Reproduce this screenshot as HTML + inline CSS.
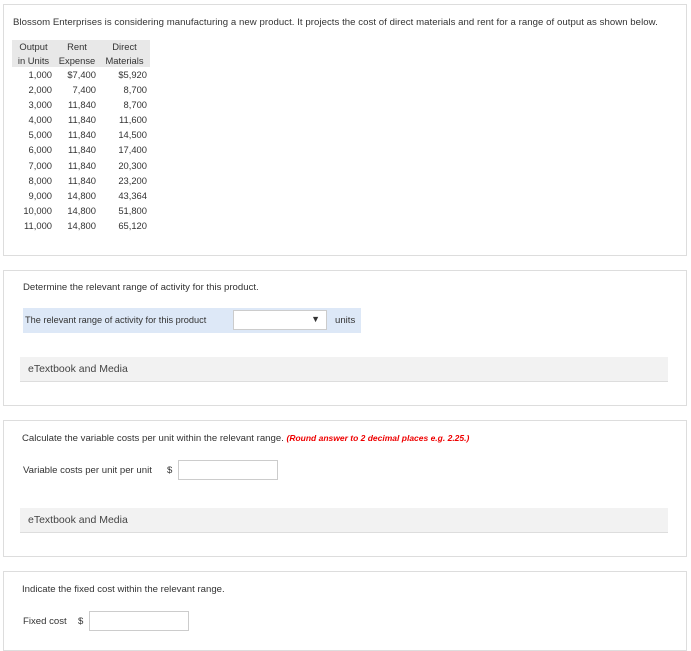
<!DOCTYPE html>
<html><head><style>
body{margin:0;background:#fff;font-family:"Liberation Sans",sans-serif;font-size:9.6px;color:#333;width:691px;height:635px;overflow:hidden;position:relative}
.p{position:absolute;left:3px;width:684px;border:1px solid #ddd;box-sizing:border-box;background:#fff}
.a{position:absolute;white-space:nowrap}
table{border-collapse:collapse;position:absolute;left:8px;top:35px;font-size:9.4px;table-layout:fixed}
td,th{padding:0 3px;text-align:right;height:15.1px;line-height:15.1px}
th{font-weight:normal;text-align:center;background:#e8e8e8;height:13.5px;line-height:13.5px}
.et{position:absolute;left:16px;width:648px;height:25px;background:#f2f2f2;border-bottom:1px solid #ddd;font-size:10.5px;line-height:25px;padding-left:8px;box-sizing:border-box;color:#444}
.inp{position:absolute;border:1px solid #ccc;background:#fff;box-sizing:border-box}
</style></head><body>
<div class="p" style="top:4px;height:252px">
<div class="a" style="left:9px;top:12px;letter-spacing:0.05px">Blossom Enterprises is considering manufacturing a new product. It projects the cost of direct materials and rent for a range of output as shown below.</div>
<table>
<colgroup><col style="width:43px"><col style="width:44px"><col style="width:51px"></colgroup>
<tr><th>Output<br>in Units</th><th>Rent<br>Expense</th><th>Direct<br>Materials</th></tr>
<tr><td>1,000</td><td>$7,400</td><td>$5,920</td></tr>
<tr><td>2,000</td><td>7,400</td><td>8,700</td></tr>
<tr><td>3,000</td><td>11,840</td><td>8,700</td></tr>
<tr><td>4,000</td><td>11,840</td><td>11,600</td></tr>
<tr><td>5,000</td><td>11,840</td><td>14,500</td></tr>
<tr><td>6,000</td><td>11,840</td><td>17,400</td></tr>
<tr><td>7,000</td><td>11,840</td><td>20,300</td></tr>
<tr><td>8,000</td><td>11,840</td><td>23,200</td></tr>
<tr><td>9,000</td><td>14,800</td><td>43,364</td></tr>
<tr><td>10,000</td><td>14,800</td><td>51,800</td></tr>
<tr><td>11,000</td><td>14,800</td><td>65,120</td></tr>
</table>
</div>
<div class="p" style="top:270px;height:136px">
<div class="a" style="left:19px;top:11px">Determine the relevant range of activity for this product.</div>
<div class="a" style="left:19px;top:37px;width:338px;height:25px;background:#dde8f7"></div>
<div class="a" style="left:21px;top:44px;font-size:9.2px">The relevant range of activity for this product</div>
<div class="inp" style="left:229px;top:39px;width:94px;height:20px"><span class="a" style="right:6px;top:3px;font-size:9px">▼</span></div>
<div class="a" style="left:331px;top:44px">units</div>
<div class="et" style="top:86px">eTextbook and Media</div>
</div>
<div class="p" style="top:420px;height:137px">
<div class="a" style="left:18px;top:12px">Calculate the variable costs per unit within the relevant range. <b style="color:#e00;font-style:italic;font-size:8.5px">(Round answer to 2 decimal places e.g. 2.25.)</b></div>
<div class="a" style="left:19px;top:44px">Variable costs per unit per unit</div>
<div class="a" style="left:163px;top:44px">$</div>
<div class="inp" style="left:174px;top:39px;width:100px;height:20px"></div>
<div class="et" style="top:87px">eTextbook and Media</div>
</div>
<div class="p" style="top:571px;height:80px">
<div class="a" style="left:18px;top:12px">Indicate the fixed cost within the relevant range.</div>
<div class="a" style="left:19px;top:44px">Fixed cost</div>
<div class="a" style="left:74px;top:44px">$</div>
<div class="inp" style="left:85px;top:39px;width:100px;height:20px"></div>
</div>
</body></html>
